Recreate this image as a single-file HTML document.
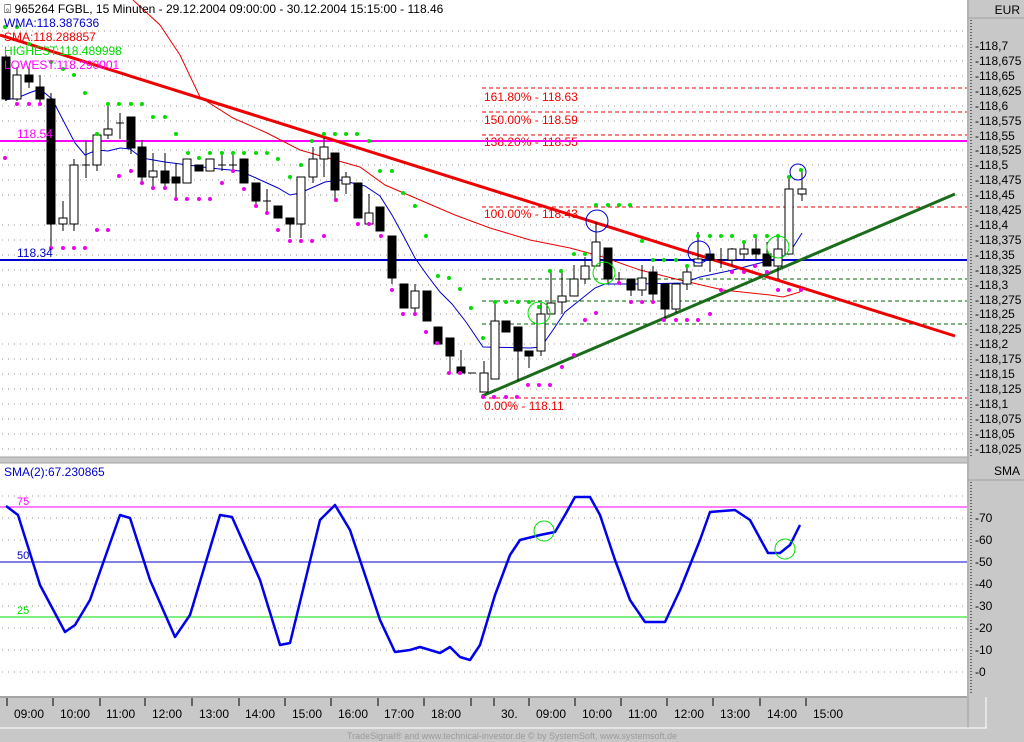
<!DOCTYPE html>
<html><head><meta charset="utf-8"><style>
html,body{margin:0;padding:0;background:#c8c8c8;}
svg{display:block;font-family:"Liberation Sans",sans-serif;}
</style></head><body>
<svg width="1024" height="742" viewBox="0 0 1024 742" xmlns="http://www.w3.org/2000/svg">
<rect x="0" y="0" width="1024" height="742" fill="#c8c8c8"/>
<rect x="0" y="0" width="967" height="457" fill="#fff"/>
<rect x="0" y="463" width="967" height="233" fill="#fff"/>
<line x1="968" y1="0" x2="968" y2="728" stroke="#a0a0a0"/>
<line x1="968" y1="18" x2="1024" y2="18" stroke="#a0a0a0"/>
<line x1="968" y1="480" x2="1024" y2="480" stroke="#a0a0a0"/>
<line x1="971" y1="20" x2="971" y2="456" stroke="#000" stroke-dasharray="1,2"/>
<line x1="971" y1="482" x2="971" y2="694" stroke="#000" stroke-dasharray="1,2"/>
<text x="1020" y="14" font-size="12" text-anchor="end">EUR</text>
<text x="1020" y="475" font-size="12" text-anchor="end">SMA</text>
<line x1="0" y1="457" x2="967" y2="457" stroke="#a0a0a0"/>
<line x1="0" y1="463" x2="967" y2="463" stroke="#a0a0a0"/>
<g stroke="#999" stroke-dasharray="1,5">
<line x1="2" y1="31" x2="967" y2="31"/><line x1="2" y1="46" x2="967" y2="46"/><line x1="2" y1="61" x2="967" y2="61"/><line x1="2" y1="76" x2="967" y2="76"/><line x1="2" y1="106" x2="967" y2="106"/><line x1="2" y1="121" x2="967" y2="121"/><line x1="2" y1="150" x2="967" y2="150"/><line x1="2" y1="165" x2="967" y2="165"/><line x1="2" y1="180" x2="967" y2="180"/><line x1="2" y1="195" x2="967" y2="195"/><line x1="2" y1="225" x2="967" y2="225"/><line x1="2" y1="240" x2="967" y2="240"/><line x1="2" y1="255" x2="967" y2="255"/><line x1="2" y1="270" x2="967" y2="270"/><line x1="2" y1="285" x2="967" y2="285"/><line x1="2" y1="314" x2="967" y2="314"/><line x1="2" y1="344" x2="967" y2="344"/><line x1="2" y1="359" x2="967" y2="359"/><line x1="2" y1="374" x2="967" y2="374"/><line x1="2" y1="389" x2="967" y2="389"/><line x1="2" y1="404" x2="967" y2="404"/><line x1="2" y1="419" x2="967" y2="419"/><line x1="2" y1="434" x2="967" y2="434"/><line x1="2" y1="449" x2="967" y2="449"/>
</g>
<g font-size="12" fill="#000">
<text x="975" y="50">-118,7</text><text x="975" y="65">-118,675</text><text x="975" y="80">-118,65</text><text x="975" y="95">-118,625</text><text x="975" y="110">-118,6</text><text x="975" y="125">-118,575</text><text x="975" y="140">-118,55</text><text x="975" y="154">-118,525</text><text x="975" y="169">-118,5</text><text x="975" y="184">-118,475</text><text x="975" y="199">-118,45</text><text x="975" y="214">-118,425</text><text x="975" y="229">-118,4</text><text x="975" y="244">-118,375</text><text x="975" y="259">-118,35</text><text x="975" y="274">-118,325</text><text x="975" y="289">-118,3</text><text x="975" y="304">-118,275</text><text x="975" y="318">-118,25</text><text x="975" y="333">-118,225</text><text x="975" y="348">-118,2</text><text x="975" y="363">-118,175</text><text x="975" y="378">-118,15</text><text x="975" y="393">-118,125</text><text x="975" y="408">-118,1</text><text x="975" y="423">-118,075</text><text x="975" y="438">-118,05</text><text x="975" y="453">-118,025</text>
<text x="975" y="522">-70</text><text x="975" y="544">-60</text><text x="975" y="566">-50</text><text x="975" y="588">-40</text><text x="975" y="610">-30</text><text x="975" y="632">-20</text><text x="975" y="654">-10</text><text x="975" y="676">-0</text>
</g>
<g stroke="#e00" stroke-dasharray="4,3">
<line x1="482" y1="88" x2="967" y2="88"/><line x1="482" y1="112" x2="967" y2="112"/><line x1="482" y1="135" x2="967" y2="135"/><line x1="482" y1="207" x2="967" y2="207"/><line x1="482" y1="398" x2="967" y2="398"/>
</g>
<g stroke="#006400" stroke-dasharray="4,3">
<line x1="482" y1="279" x2="967" y2="279"/><line x1="482" y1="301" x2="967" y2="301"/><line x1="482" y1="324" x2="967" y2="324"/>
</g>
<g font-size="12" fill="#e00">
<text x="484" y="101">161.80% - 118.63</text><text x="484" y="124">150.00% - 118.59</text><text x="484" y="146">138.20% - 118.55</text><text x="484" y="218">100.00% - 118.43</text><text x="484" y="410">0.00% - 118.11</text>
</g>
<line x1="0" y1="141" x2="967" y2="141" stroke="#f0f" stroke-width="2"/>
<line x1="0" y1="260" x2="967" y2="260" stroke="#00c" stroke-width="2"/>
<polyline fill="none" stroke="#e00" stroke-width="1" points="133,0 160,25 180,55 200,97 233,118 267,133 300,150 335,160 360,167 385,185 420,200 455,215 490,228 530,240 570,248 600,256 640,270 680,280 723,290 770,295 783,297 800,292"/>
<polyline fill="none" stroke="#00c" stroke-width="1" points="5,100 17,98 29,93 40,89 52,99 75,143 85,155 97,150 108,151 120,148 130,149 142,158 165,162 188,165 210,168 240,171 256,178 278,188 290,195 300,193 325,182 340,180 365,186 380,196 392,215 404,237 415,258 427,275 440,292 452,304 466,322 483,347 530,348 541,347 553,330 565,312 580,300 595,288 605,284 640,284 683,283 700,277 733,270 760,263 780,258 790,252 802,233"/>
<line x1="0" y1="35" x2="955" y2="336" stroke="#e00" stroke-width="3"/>
<line x1="482" y1="396" x2="955" y2="194" stroke="#1a6b1a" stroke-width="3"/>
<g stroke="#000" stroke-width="1" shape-rendering="crispEdges">
<line x1="6" y1="55" x2="6" y2="101"/><rect x="2" y="57" width="8" height="42" fill="#000"/>
<line x1="17" y1="67" x2="17" y2="101"/><rect x="13" y="75" width="8" height="24" fill="#fff"/>
<line x1="29" y1="67" x2="29" y2="88"/><rect x="25" y="75" width="8" height="7" fill="#000"/>
<line x1="40" y1="75" x2="40" y2="103"/><rect x="36" y="87" width="8" height="12" fill="#000"/>
<line x1="51" y1="93" x2="51" y2="248"/><rect x="47" y="99" width="8" height="125" fill="#000"/>
<line x1="63" y1="201" x2="63" y2="231"/><rect x="59" y="218" width="8" height="6" fill="#fff"/>
<line x1="74" y1="159" x2="74" y2="231"/><rect x="70" y="165" width="8" height="59" fill="#fff"/>
<line x1="86" y1="141" x2="86" y2="178"/><line x1="82" y1="165" x2="90" y2="165"/>
<line x1="97" y1="133" x2="97" y2="171"/><rect x="93" y="135" width="8" height="30" fill="#fff"/>
<line x1="108" y1="106" x2="108" y2="139"/><rect x="104" y="129" width="8" height="6" fill="#fff"/>
<line x1="120" y1="113" x2="120" y2="139"/><line x1="116" y1="123" x2="124" y2="123"/>
<line x1="131" y1="117" x2="131" y2="154"/><rect x="127" y="117" width="8" height="31" fill="#000"/>
<line x1="142" y1="140" x2="142" y2="183"/><rect x="138" y="147" width="8" height="30" fill="#000"/>
<line x1="153" y1="153" x2="153" y2="186"/><rect x="149" y="171" width="8" height="6" fill="#fff"/>
<line x1="165" y1="153" x2="165" y2="186"/><rect x="161" y="171" width="8" height="12" fill="#000"/>
<line x1="176" y1="163" x2="176" y2="197"/><rect x="172" y="177" width="8" height="6" fill="#000"/>
<rect x="183" y="159" width="8" height="24" fill="#fff"/>
<rect x="195" y="165" width="8" height="6" fill="#000"/>
<rect x="206" y="159" width="8" height="12" fill="#fff"/>
<line x1="222" y1="153" x2="222" y2="171"/><line x1="218" y1="165" x2="226" y2="165"/>
<line x1="233" y1="153" x2="233" y2="171"/><line x1="229" y1="165" x2="237" y2="165"/>
<rect x="240" y="159" width="8" height="24" fill="#000"/>
<line x1="256" y1="183" x2="256" y2="207"/><rect x="252" y="183" width="8" height="18" fill="#000"/>
<line x1="267" y1="189" x2="267" y2="213"/><line x1="263" y1="201" x2="271" y2="201"/>
<rect x="274" y="206" width="8" height="12" fill="#000"/>
<line x1="290" y1="218" x2="290" y2="238"/><rect x="286" y="218" width="8" height="6" fill="#000"/>
<line x1="301" y1="177" x2="301" y2="238"/><rect x="297" y="177" width="8" height="47" fill="#fff"/>
<line x1="313" y1="147" x2="313" y2="183"/><rect x="309" y="159" width="8" height="18" fill="#fff"/>
<line x1="324" y1="138" x2="324" y2="177"/><rect x="320" y="147" width="8" height="12" fill="#fff"/>
<line x1="335" y1="153" x2="335" y2="201"/><rect x="331" y="153" width="8" height="37" fill="#000"/>
<line x1="346" y1="172" x2="346" y2="194"/><rect x="342" y="177" width="8" height="7" fill="#fff"/>
<rect x="354" y="183" width="8" height="35" fill="#000"/>
<line x1="369" y1="194" x2="369" y2="224"/><rect x="365" y="213" width="8" height="11" fill="#fff"/>
<rect x="376" y="207" width="8" height="24" fill="#000"/>
<line x1="392" y1="236" x2="392" y2="284"/><rect x="388" y="236" width="8" height="42" fill="#000"/>
<rect x="400" y="284" width="8" height="24" fill="#000"/>
<line x1="415" y1="284" x2="415" y2="314"/><rect x="411" y="291" width="8" height="17" fill="#fff"/>
<rect x="423" y="291" width="8" height="30" fill="#000"/>
<rect x="434" y="327" width="8" height="17" fill="#000"/>
<line x1="450" y1="338" x2="450" y2="374"/><rect x="446" y="338" width="8" height="18" fill="#000"/>
<line x1="461" y1="350" x2="461" y2="373"/><rect x="457" y="367" width="8" height="6" fill="#000"/>
<line x1="468" y1="373" x2="476" y2="373"/>
<line x1="484" y1="361" x2="484" y2="392"/><rect x="480" y="373" width="8" height="19" fill="#fff"/>
<line x1="495" y1="303" x2="495" y2="379"/><rect x="491" y="321" width="8" height="58" fill="#fff"/>
<rect x="502" y="321" width="8" height="11" fill="#000"/>
<line x1="518" y1="327" x2="518" y2="381"/><rect x="514" y="327" width="8" height="24" fill="#000"/>
<line x1="529" y1="351" x2="529" y2="368"/><rect x="525" y="351" width="8" height="5" fill="#000"/>
<line x1="541" y1="303" x2="541" y2="356"/><rect x="537" y="314" width="8" height="37" fill="#fff"/>
<line x1="551" y1="271" x2="551" y2="314"/><rect x="547" y="303" width="8" height="11" fill="#fff"/>
<line x1="562" y1="271" x2="562" y2="314"/><rect x="558" y="296" width="8" height="6" fill="#fff"/>
<line x1="574" y1="265" x2="574" y2="296"/><rect x="570" y="279" width="8" height="17" fill="#fff"/>
<line x1="585" y1="257" x2="585" y2="284"/><rect x="581" y="266" width="8" height="13" fill="#fff"/>
<line x1="596" y1="222" x2="596" y2="266"/><rect x="592" y="242" width="8" height="24" fill="#fff"/>
<line x1="608" y1="248" x2="608" y2="284"/><rect x="604" y="248" width="8" height="31" fill="#000"/>
<line x1="619" y1="272" x2="619" y2="283"/><line x1="615" y1="279" x2="623" y2="279"/>
<line x1="631" y1="279" x2="631" y2="296"/><rect x="627" y="279" width="8" height="11" fill="#000"/>
<line x1="642" y1="265" x2="642" y2="296"/><rect x="638" y="278" width="8" height="12" fill="#fff"/>
<line x1="653" y1="266" x2="653" y2="300"/><rect x="649" y="272" width="8" height="22" fill="#000"/>
<line x1="665" y1="284" x2="665" y2="318"/><rect x="661" y="284" width="8" height="25" fill="#000"/>
<line x1="676" y1="284" x2="676" y2="313"/><rect x="672" y="284" width="8" height="25" fill="#fff"/>
<line x1="687" y1="265" x2="687" y2="290"/><rect x="683" y="272" width="8" height="12" fill="#fff"/>
<line x1="698" y1="232" x2="698" y2="266"/><rect x="694" y="259" width="8" height="7" fill="#fff"/>
<line x1="710" y1="254" x2="710" y2="272"/><rect x="706" y="254" width="8" height="6" fill="#000"/>
<line x1="721" y1="248" x2="721" y2="268"/><line x1="717" y1="260" x2="725" y2="260"/>
<line x1="732" y1="248" x2="732" y2="266"/><rect x="728" y="249" width="8" height="11" fill="#fff"/>
<line x1="744" y1="242" x2="744" y2="260"/><rect x="740" y="249" width="8" height="5" fill="#fff"/>
<line x1="756" y1="236" x2="756" y2="260"/><rect x="752" y="249" width="8" height="5" fill="#000"/>
<line x1="767" y1="242" x2="767" y2="266"/><rect x="763" y="254" width="8" height="12" fill="#000"/>
<line x1="778" y1="236" x2="778" y2="279"/><rect x="774" y="249" width="8" height="17" fill="#fff"/>
<line x1="789" y1="176" x2="789" y2="254"/><rect x="785" y="189" width="8" height="65" fill="#fff"/>
<line x1="802" y1="169" x2="802" y2="201"/><rect x="798" y="189" width="8" height="5" fill="#fff"/>
</g>
<g fill="#0d0">
<circle cx="5" cy="27" r="2"/><circle cx="17" cy="27" r="2"/><circle cx="29" cy="44" r="2"/><circle cx="51" cy="62" r="2"/><circle cx="63" cy="69" r="2"/><circle cx="74" cy="75" r="2"/><circle cx="85" cy="93" r="2"/><circle cx="97" cy="134" r="2"/><circle cx="108" cy="104" r="2"/><circle cx="119" cy="104" r="2"/><circle cx="131" cy="104" r="2"/><circle cx="142" cy="104" r="2"/><circle cx="153" cy="117" r="2"/><circle cx="165" cy="117" r="2"/><circle cx="176" cy="134" r="2"/><circle cx="188" cy="153" r="2"/><circle cx="199" cy="158" r="2"/><circle cx="210" cy="153" r="2"/><circle cx="222" cy="153" r="2"/><circle cx="233" cy="153" r="2"/><circle cx="244" cy="153" r="2"/><circle cx="256" cy="153" r="2"/><circle cx="267" cy="153" r="2"/><circle cx="278" cy="159" r="2"/><circle cx="290" cy="177" r="2"/><circle cx="301" cy="165" r="2"/><circle cx="312" cy="141" r="2"/><circle cx="324" cy="134" r="2"/><circle cx="335" cy="134" r="2"/><circle cx="346" cy="134" r="2"/><circle cx="357" cy="134" r="2"/><circle cx="369" cy="141" r="2"/><circle cx="380" cy="171" r="2"/><circle cx="392" cy="171" r="2"/><circle cx="403" cy="193" r="2"/><circle cx="415" cy="206" r="2"/><circle cx="426" cy="236" r="2"/><circle cx="438" cy="276" r="2"/><circle cx="449" cy="278" r="2"/><circle cx="460" cy="289" r="2"/><circle cx="471" cy="308" r="2"/><circle cx="483" cy="338" r="2"/><circle cx="495" cy="302" r="2"/><circle cx="506" cy="302" r="2"/><circle cx="518" cy="302" r="2"/><circle cx="529" cy="302" r="2"/><circle cx="539" cy="307" r="2"/><circle cx="550" cy="271" r="2"/><circle cx="561" cy="271" r="2"/><circle cx="574" cy="254" r="2"/><circle cx="585" cy="254" r="2"/><circle cx="596" cy="205" r="2"/><circle cx="608" cy="205" r="2"/><circle cx="619" cy="205" r="2"/><circle cx="630" cy="205" r="2"/><circle cx="642" cy="241" r="2"/><circle cx="653" cy="260" r="2"/><circle cx="664" cy="260" r="2"/><circle cx="676" cy="260" r="2"/><circle cx="687" cy="266" r="2"/><circle cx="698" cy="236" r="2"/><circle cx="710" cy="236" r="2"/><circle cx="721" cy="236" r="2"/><circle cx="732" cy="236" r="2"/><circle cx="744" cy="242" r="2"/><circle cx="755" cy="236" r="2"/><circle cx="767" cy="236" r="2"/><circle cx="778" cy="236" r="2"/><circle cx="789" cy="177" r="2"/><circle cx="801" cy="170" r="2"/>
</g>
<g fill="#e0e">
<circle cx="5" cy="158" r="2"/><circle cx="17" cy="104" r="2"/><circle cx="29" cy="104" r="2"/><circle cx="40" cy="104" r="2"/><circle cx="51" cy="248" r="2"/><circle cx="63" cy="248" r="2"/><circle cx="74" cy="248" r="2"/><circle cx="85" cy="248" r="2"/><circle cx="97" cy="230" r="2"/><circle cx="108" cy="230" r="2"/><circle cx="119" cy="176" r="2"/><circle cx="131" cy="171" r="2"/><circle cx="142" cy="183" r="2"/><circle cx="153" cy="188" r="2"/><circle cx="165" cy="188" r="2"/><circle cx="176" cy="199" r="2"/><circle cx="187" cy="199" r="2"/><circle cx="199" cy="199" r="2"/><circle cx="210" cy="199" r="2"/><circle cx="222" cy="183" r="2"/><circle cx="233" cy="171" r="2"/><circle cx="244" cy="189" r="2"/><circle cx="256" cy="206" r="2"/><circle cx="267" cy="213" r="2"/><circle cx="278" cy="230" r="2"/><circle cx="290" cy="241" r="2"/><circle cx="301" cy="241" r="2"/><circle cx="312" cy="241" r="2"/><circle cx="324" cy="236" r="2"/><circle cx="336" cy="200" r="2"/><circle cx="358" cy="224" r="2"/><circle cx="369" cy="224" r="2"/><circle cx="381" cy="236" r="2"/><circle cx="392" cy="290" r="2"/><circle cx="403" cy="314" r="2"/><circle cx="415" cy="314" r="2"/><circle cx="426" cy="332" r="2"/><circle cx="437" cy="343" r="2"/><circle cx="449" cy="373" r="2"/><circle cx="460" cy="373" r="2"/><circle cx="483" cy="397" r="2"/><circle cx="494" cy="397" r="2"/><circle cx="506" cy="397" r="2"/><circle cx="517" cy="397" r="2"/><circle cx="528" cy="385" r="2"/><circle cx="539" cy="385" r="2"/><circle cx="550" cy="385" r="2"/><circle cx="562" cy="367" r="2"/><circle cx="574" cy="355" r="2"/><circle cx="585" cy="320" r="2"/><circle cx="596" cy="313" r="2"/><circle cx="619" cy="283" r="2"/><circle cx="631" cy="302" r="2"/><circle cx="642" cy="302" r="2"/><circle cx="653" cy="302" r="2"/><circle cx="664" cy="320" r="2"/><circle cx="676" cy="320" r="2"/><circle cx="687" cy="320" r="2"/><circle cx="698" cy="320" r="2"/><circle cx="710" cy="314" r="2"/><circle cx="721" cy="290" r="2"/><circle cx="732" cy="272" r="2"/><circle cx="744" cy="272" r="2"/><circle cx="755" cy="266" r="2"/><circle cx="767" cy="272" r="2"/><circle cx="778" cy="290" r="2"/><circle cx="789" cy="290" r="2"/><circle cx="801" cy="290" r="2"/>
</g>
<g fill="none" stroke-width="1">
<circle cx="597" cy="221" r="11" stroke="#00c"/><circle cx="699" cy="252" r="11" stroke="#00c"/><circle cx="798" cy="172" r="8" stroke="#00c"/>
<circle cx="539" cy="313" r="11" stroke="#0d0"/><circle cx="604" cy="273" r="11" stroke="#0d0"/><circle cx="778" cy="247" r="11" stroke="#0d0"/>
</g>
<text x="17" y="138" font-size="12" fill="#f0f">118.54</text>
<text x="17" y="257" font-size="12" fill="#00c">118.34</text>
<g font-size="12">
<text x="4" y="13" fill="#000">&#x233A; 965264  FGBL, 15 Minuten - 29.12.2004 09:00:00 - 30.12.2004 15:15:00 - 118.46</text>
<text x="4" y="27" fill="#00c">WMA:118.387636</text>
<text x="4" y="41" fill="#e00">SMA:118.288857</text>
<text x="4" y="55" fill="#0d0">HIGHEST:118.489998</text>
<text x="4" y="69" fill="#f0f">LOWEST:118.290001</text>
</g>
<g stroke="#999" stroke-dasharray="1,5">
<line x1="2" y1="496" x2="967" y2="496"/><line x1="2" y1="518" x2="967" y2="518"/><line x1="2" y1="540" x2="967" y2="540"/><line x1="2" y1="584" x2="967" y2="584"/><line x1="2" y1="606" x2="967" y2="606"/><line x1="2" y1="628" x2="967" y2="628"/><line x1="2" y1="650" x2="967" y2="650"/><line x1="2" y1="672" x2="967" y2="672"/>
</g>
<line x1="0" y1="507" x2="967" y2="507" stroke="#f0f"/>
<line x1="0" y1="562" x2="967" y2="562" stroke="#00c"/>
<line x1="0" y1="617" x2="967" y2="617" stroke="#0d0"/>
<text x="4" y="476" font-size="12" fill="#00c">SMA(2):67.230865</text>
<text x="17" y="505" font-size="11" fill="#f0f">75</text>
<text x="17" y="559" font-size="11" fill="#00c">50</text>
<text x="17" y="614" font-size="11" fill="#0d0">25</text>
<polyline fill="none" stroke="#00e" stroke-width="2.5" stroke-linejoin="round" points="6,506 18,515 40,585 65,632 75,625 90,600 120,515 130,518 150,580 175,637 190,615 220,515 232,517 260,580 280,645 290,643 320,520 335,505 350,530 380,620 395,652 410,650 420,647 430,650 440,653 450,647 460,657 470,660 480,645 495,595 510,555 520,540 540,535 555,532 565,515 575,497 590,497 600,515 615,560 630,600 645,622 665,622 680,590 700,540 710,512 735,510 750,520 768,553 780,553 790,545 800,525"/>
<circle cx="544" cy="531" r="10" fill="none" stroke="#0d0"/>
<circle cx="785" cy="549" r="10" fill="none" stroke="#0d0"/>
<line x1="0" y1="697" x2="967" y2="697" stroke="#808080"/>
<line x1="0" y1="728" x2="987" y2="728" stroke="#fff"/>
<line x1="986" y1="697" x2="986" y2="728" stroke="#fff"/>
<g stroke="#000">
<line x1="7" y1="698" x2="7" y2="706"/><line x1="53" y1="698" x2="53" y2="706"/><line x1="100" y1="698" x2="100" y2="706"/><line x1="145" y1="698" x2="145" y2="706"/><line x1="192" y1="698" x2="192" y2="706"/><line x1="239" y1="698" x2="239" y2="706"/><line x1="285" y1="698" x2="285" y2="706"/><line x1="331" y1="698" x2="331" y2="706"/><line x1="378" y1="698" x2="378" y2="706"/><line x1="424" y1="698" x2="424" y2="706"/><line x1="471" y1="698" x2="471" y2="706"/><line x1="494" y1="698" x2="494" y2="706"/><line x1="529" y1="698" x2="529" y2="706"/><line x1="575" y1="698" x2="575" y2="706"/><line x1="621" y1="698" x2="621" y2="706"/><line x1="667" y1="698" x2="667" y2="706"/><line x1="713" y1="698" x2="713" y2="706"/><line x1="760" y1="698" x2="760" y2="706"/><line x1="806" y1="698" x2="806" y2="706"/>
</g>
<g font-size="12" fill="#000">
<text x="14" y="718">09:00</text><text x="60" y="718">10:00</text><text x="106" y="718">11:00</text><text x="152" y="718">12:00</text><text x="199" y="718">13:00</text><text x="245" y="718">14:00</text><text x="292" y="718">15:00</text><text x="338" y="718">16:00</text><text x="384" y="718">17:00</text><text x="431" y="718">18:00</text><text x="501" y="718">30.</text><text x="536" y="718">09:00</text><text x="582" y="718">10:00</text><text x="628" y="718">11:00</text><text x="674" y="718">12:00</text><text x="720" y="718">13:00</text><text x="767" y="718">14:00</text><text x="813" y="718">15:00</text>
</g>
<text x="512" y="739" font-size="9" fill="#9a9a9a" text-anchor="middle">TradeSignal® and www.technical-investor.de © by  SystemSoft, www.systemsoft.de</text>
</svg>
</body></html>
